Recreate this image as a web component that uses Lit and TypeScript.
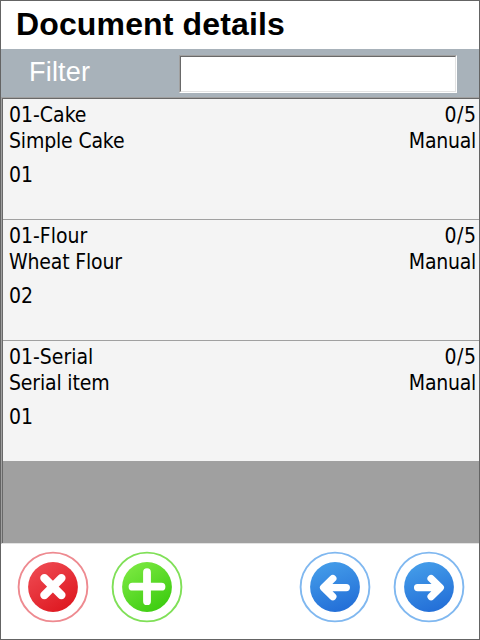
import { LitElement, html, css, svg } from "lit";
import { customElement, property } from "lit/decorators.js";

interface Item {
  code: string;
  name: string;
  line: string;
  count: string;
  mode: string;
}

const ITEMS: Item[] = [
  { code: "01-Cake", name: "Simple Cake", line: "01", count: "0/5", mode: "Manual" },
  { code: "01-Flour", name: "Wheat Flour", line: "02", count: "0/5", mode: "Manual" },
  { code: "01-Serial", name: "Serial item", line: "01", count: "0/5", mode: "Manual" },
];

const ICONS: Record<string, { ring: string; from: string; to: string; width: number; path: string }> = {
  cancel: { ring: "#ee8a90", from: "#ee4850", to: "#de1820", width: 8.4, path: "M27.4 27.1L44.4 44.1M44.4 27.1L27.4 44.1" },
  add: { ring: "#80e058", from: "#7ae840", to: "#3ccc10", width: 7.8, path: "M36 21.2V50.2M21.5 35.7H50.5" },
  back: { ring: "#80b8f0", from: "#429ae8", to: "#2470d8", width: 7.3, path: "M47.3 36.6H26M33.8 27.5L24.6 36.6L33.8 45.7" },
  next: { ring: "#80b8f0", from: "#429ae8", to: "#2470d8", width: 7.3, path: "M24.6 36.6H46M38.1 27.5L47.3 36.6L38.1 45.7" },
};

@customElement("round-button")
export class RoundButton extends LitElement {
  @property() kind = "add";

  static styles = css`
    :host { display: block; width: 72px; height: 72px; }
    svg { display: block; }
  `;

  render() {
    const icon = ICONS[this.kind];
    const blue = this.kind === "back" || this.kind === "next";
    return html`<svg width="72" height="72" viewBox="0 0 72 72" role="img" aria-label=${this.kind}>
      ${svg`
        <defs>
          <linearGradient id="fill" x1=${blue ? 0.35 : 0.2} y1="0.05" x2=${blue ? 0.65 : 0.8} y2="0.95">
            <stop offset="0" stop-color=${icon.from}></stop>
            <stop offset="1" stop-color=${icon.to}></stop>
          </linearGradient>
        </defs>
        <circle cx="36" cy="36" r="34.4" fill="#fff" stroke=${icon.ring} stroke-width="1.9"></circle>
        <circle cx="36" cy="36" r="24.9" fill="url(#fill)"></circle>
        <path d=${icon.path} fill="none" stroke="#fff"
          stroke-width=${icon.width} stroke-linecap="round" stroke-linejoin="round"></path>
      `}
    </svg>`;
  }
}

@customElement("app-root")
export class AppRoot extends LitElement {
  static styles = css`
    :host {
      display: flex;
      flex-direction: column;
      box-sizing: border-box;
      width: 480px;
      height: 640px;
      border: 1px solid #646464;
      background: #fff;
      color: #000;
      font-family: "Liberation Sans", Arial, sans-serif;
      overflow: hidden;
    }
    .title {
      box-sizing: border-box;
      height: 48px;
      margin: 0;
      padding-left: 15px;
      font-size: 32px;
      font-weight: bold;
      letter-spacing: 0.14px;
      line-height: 46px;
    }
    .filter {
      display: flex;
      align-items: flex-start;
      box-sizing: border-box;
      height: 48px;
      padding: 6px 0 0 28px;
      background: #a8b2ba;
    }
    .filter label {
      width: 150px;
      color: #fff;
      font-size: 27px;
      letter-spacing: 0.2px;
      line-height: 35px;
    }
    .field {
      box-sizing: border-box;
      width: 278px;
      height: 38px;
      border: 1px solid;
      border-color: #a0a0a0 #fff #fff #a0a0a0;
    }
    .field input {
      display: block;
      box-sizing: border-box;
      width: 100%;
      height: 100%;
      margin: 0;
      padding: 0 4px;
      border: 1px solid;
      border-color: #696969 #e3e3e3 #e3e3e3 #696969;
      border-radius: 0;
      outline: none;
      background: #fff;
      font: 24px "Liberation Sans", sans-serif;
    }
    .list {
      box-sizing: border-box;
      height: 447px;
      border: 1px solid #a0a0a0;
      border-right: 0;
      border-bottom-color: #e3e3e3;
    }
    .inner {
      box-sizing: border-box;
      height: 100%;
      border: solid #696969;
      border-width: 1px 0 0 1px;
      background: #a0a0a0;
    }
    .row {
      display: flex;
      justify-content: space-between;
      box-sizing: border-box;
      height: 121px;
      padding: 3px 3px 0 6px;
      border-bottom: 1px solid #a0a0a0;
      background: #f4f4f4;
      font-family: "DejaVu Sans Condensed", "DejaVu Sans", sans-serif;
      font-stretch: condensed;
      font-size: 21px;
      line-height: 26px;
      white-space: nowrap;
    }
    .name { letter-spacing: -0.16px; }
    .line { margin-top: 8px; }
    .count { letter-spacing: 0.6px; margin-right: -0.6px; }
    .mode { letter-spacing: -0.25px; }
    .right { text-align: right; }
    .actions {
      display: flex;
      justify-content: space-between;
      padding: 7px 14px 0 16px;
    }
    .group { display: flex; gap: 22px; }
  `;

  render() {
    return html`
      <h1 class="title">Document details</h1>
      <div class="filter">
        <label for="filter">Filter</label>
        <div class="field"><input id="filter" type="text" /></div>
      </div>
      <div class="list">
        <div class="inner">
          ${ITEMS.map(
            (item) => html`<div class="row">
              <div class="left">
                <div>${item.code}</div>
                <div class="name">${item.name}</div>
                <div class="line">${item.line}</div>
              </div>
              <div class="right">
                <div class="count">${item.count}</div>
                <div class="mode">${item.mode}</div>
              </div>
            </div>`
          )}
        </div>
      </div>
      <div class="actions">
        <div class="group">
          <round-button kind="cancel"></round-button>
          <round-button kind="add"></round-button>
        </div>
        <div class="group">
          <round-button kind="back"></round-button>
          <round-button kind="next"></round-button>
        </div>
      </div>
    `;
  }
}
